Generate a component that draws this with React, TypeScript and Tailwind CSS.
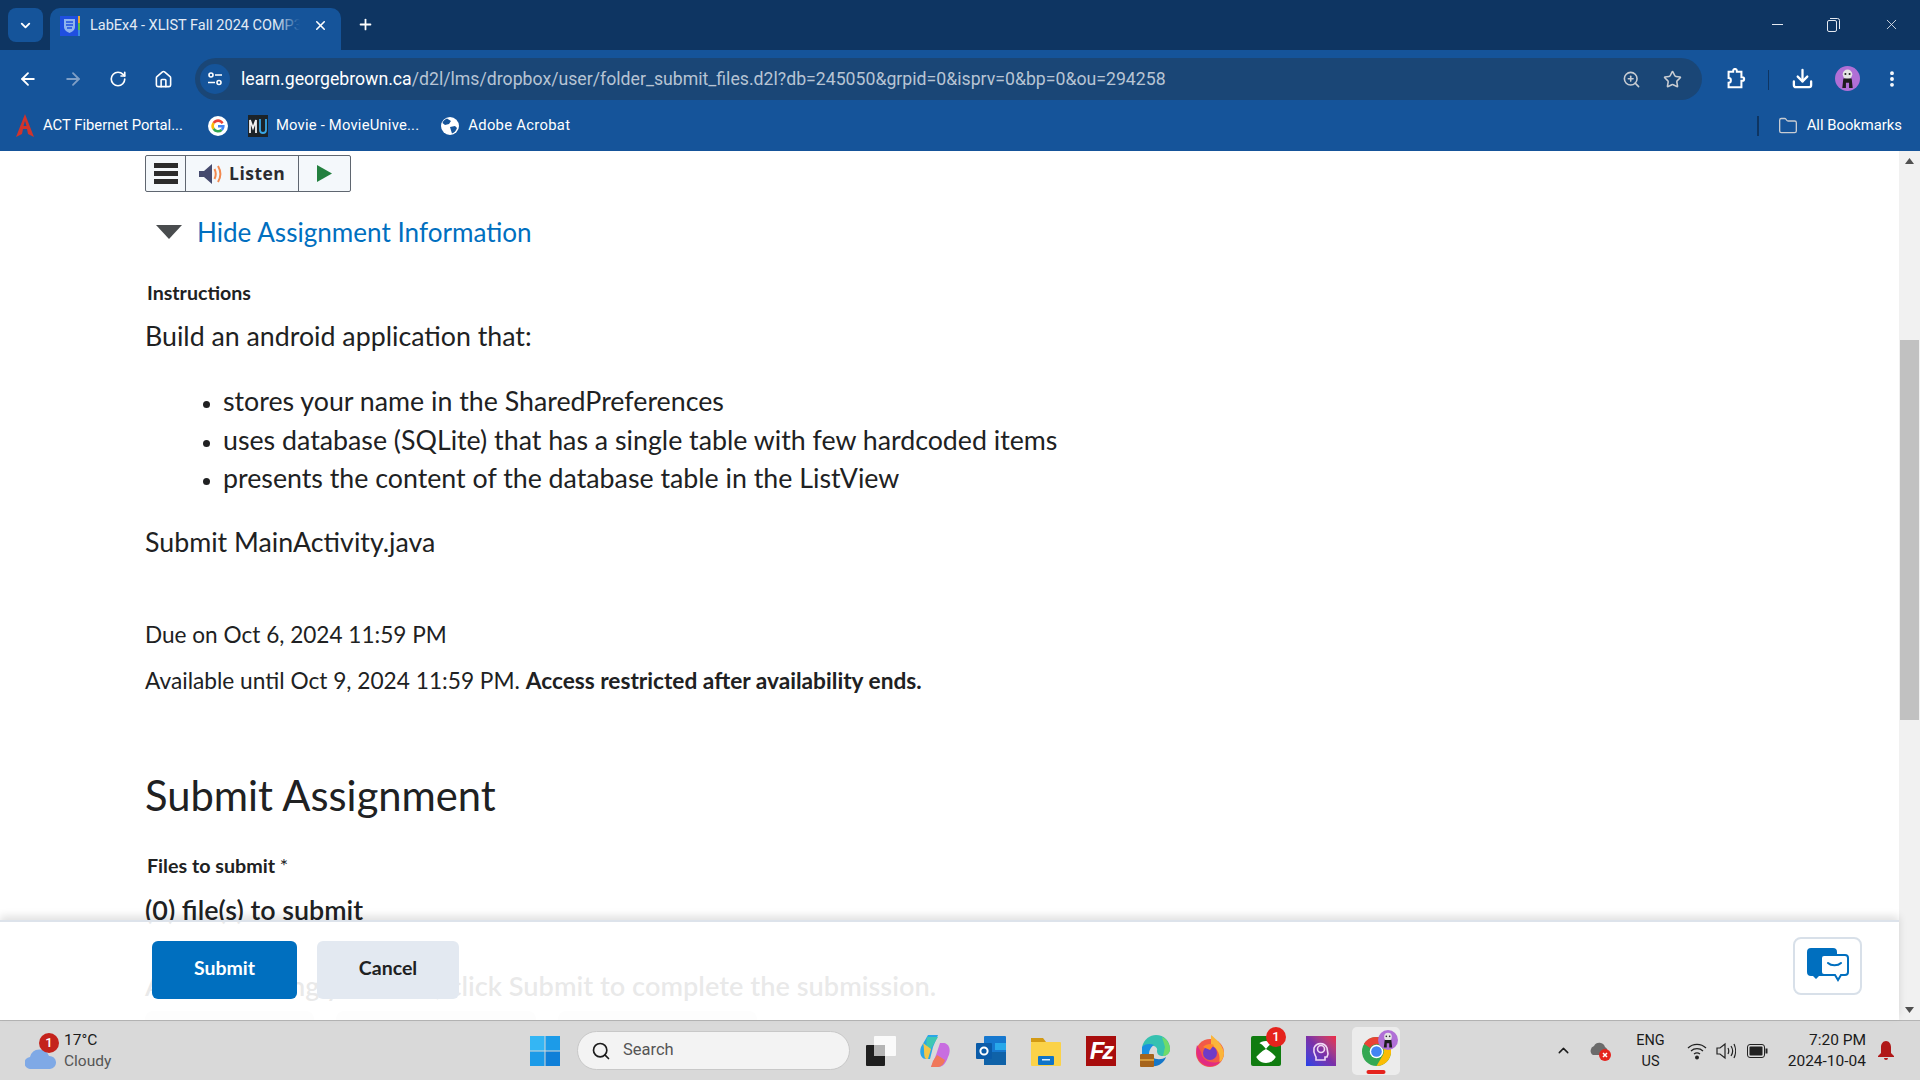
import { ArrowLeft, ArrowRight, ChevronDown, ChevronUp, Download, Folder, House, MoreVertical, Plus, RotateCw, Search, Star, X, ZoomIn } from "lucide-react";

const bullets = [
  "stores your name in the SharedPreferences",
  "uses database (SQLite) that has a single table with few hardcoded items",
  "presents the content of the database table in the ListView",
];

function PandaAvatar({ size }: { size: number }) {
  return (
    <svg width={size} height={size} viewBox="0 0 24 24">
      <circle cx="12" cy="12" r="12" fill="#b06fd6" />
      <circle cx="12" cy="8" r="4.6" fill="#e4e4e4" />
      <circle cx="10" cy="7.6" r="1" fill="#222" />
      <circle cx="14" cy="7.6" r="1" fill="#222" />
      <path d="M8 12h8l1 9h-3.5v-5h-3v5H7z" fill="#1c1c1c" />
    </svg>
  );
}

function TitleBar() {
  return (
    <div className="flex h-[50px] shrink-0 items-end bg-[#0e3562] pl-[8px] text-white">
      <div className="mb-[8px] flex h-[34px] w-[35px] items-center justify-center rounded-lg bg-[#15549a]">
        <ChevronDown size={15} strokeWidth={3} />
      </div>
      <div className="ml-[7px] flex h-[42px] w-[291px] items-center rounded-t-[10px] bg-[#15549a] pb-[7px] pl-[10px] pr-[13px]">
        <svg width="20" height="20" viewBox="0 0 20 20" className="shrink-0">
          <rect width="20" height="20" fill="#1f4fe0" />
          <rect x="18" width="2" height="7" fill="#e8a33a" />
          <rect x="18" y="7" width="2" height="7" fill="#55c04a" />
          <rect x="18" y="14" width="2" height="6" fill="#3a8de0" />
          <path d="M4 3h11v8c0 3-3 5-5.5 6C7 16 4 14 4 11z" fill="#8fb4ee" />
          <path d="M6 6h7M6 9h7M7 12h5" stroke="#1f4fe0" strokeWidth="1.4" />
        </svg>
        <div className="relative ml-[10px] w-[210px] overflow-hidden font-['Roboto',sans-serif] text-[14.5px] whitespace-nowrap text-[#e3ebf5]">
          LabEx4 - XLIST Fall 2024 COMP3
          <div className="absolute top-0 right-0 bottom-0 w-[24px] bg-gradient-to-r from-transparent to-[#15549a]" />
        </div>
        <X size={15} strokeWidth={2.5} className="ml-auto" />
      </div>
      <div className="mb-[17px] ml-[16px]">
        <Plus size={17} strokeWidth={2.5} />
      </div>
      <div className="mb-[17px] ml-auto flex items-center pr-[20px] text-[#e4e9f0]">
        <div className="h-px w-[11px] bg-current" />
        <svg width="13" height="14" viewBox="0 0 13 14" fill="none" stroke="currentColor" className="ml-[44px]">
          <rect x="0.5" y="2.5" width="9" height="11" rx="1.5" />
          <path d="M3 .5h7.5a2 2 0 0 1 2 2V11" />
        </svg>
        <X size={17} strokeWidth={1.2} className="ml-[43px]" />
      </div>
    </div>
  );
}

function AddressBar() {
  return (
    <div className="flex h-[57px] items-start pt-[8px] pl-[18px] text-white">
      <ArrowLeft size={20} strokeWidth={2.2} className="mt-[11px] shrink-0" />
      <ArrowRight size={20} strokeWidth={2.2} className="mt-[11px] ml-[25px] shrink-0 text-[#7f9fc6]" />
      <RotateCw size={18} strokeWidth={2.2} className="mt-[12px] ml-[26px] shrink-0" />
      <House size={19} strokeWidth={2} className="mt-[12px] ml-[27px] shrink-0" />
      <div className="ml-[22px] flex h-[42px] w-[1507px] shrink-0 items-center rounded-full bg-[#1a4676] pl-[5px] pr-[20px]">
        <div className="flex h-[30px] w-[30px] items-center justify-center rounded-full bg-[#15549a]">
          <svg width="16" height="14" viewBox="0 0 16 14" fill="none" stroke="#fff" strokeWidth="1.6">
            <circle cx="4" cy="3" r="2" />
            <path d="M8 3h7M1 10.5h7" />
            <circle cx="12" cy="10.5" r="2" />
          </svg>
        </div>
        <span className="ml-[11px] font-['Roboto',sans-serif] text-[17.7px] whitespace-nowrap text-[#b7c4d4]">
          <span className="text-white">learn.georgebrown.ca</span>/d2l/lms/dropbox/user/folder_submit_files.d2l?db=245050&grpid=0&isprv=0&bp=0&ou=294258
        </span>
        <ZoomIn size={19} strokeWidth={2} className="ml-auto text-[#c8ccd2]" />
        <Star size={19} strokeWidth={2} className="ml-[22px] text-[#c8ccd2]" />
      </div>
      <svg width="22" height="22" viewBox="0 0 24 24" fill="none" stroke="#fff" strokeWidth="2.2" className="mt-[10px] ml-[22px] shrink-0">
        <path d="M5 4h5V3a2 2 0 0 1 4 0v1h5v6h1a2 2 0 0 1 0 4h-1v7H5v-5a2.5 2.5 0 0 0 0-5z" />
      </svg>
      <div className="mt-[12px] ml-[22px] h-[20px] w-px shrink-0 bg-[#0e3562]" />
      <Download size={23} strokeWidth={2.4} className="mt-[9px] ml-[22px] shrink-0" />
      <div className="mt-[8px] ml-[21px] shrink-0">
        <PandaAvatar size={25} />
      </div>
      <MoreVertical size={20} strokeWidth={2.6} className="mt-[11px] ml-[22px] shrink-0" />
    </div>
  );
}

function BookmarksBar() {
  return (
    <div className="flex h-[37px] items-center pl-[16px] pr-[18px] font-['Roboto',sans-serif] text-[14.8px] text-white">
      <svg width="18" height="24" viewBox="0 0 18 24">
        <path d="M9 0 18 23l-6-3-1-5H7l-1 5-6 3z" fill="#d0342c" />
        <path d="M7.5 12h3L9 7z" fill="#15549a" />
      </svg>
      <span className="ml-[9px]">ACT Fibernet Portal...</span>
      <svg width="20" height="20" viewBox="0 0 20 20" className="ml-[25px]">
        <circle cx="10" cy="10" r="10" fill="#fff" />
        <path d="M15.6 6.4A6.6 6.6 0 0 0 4.6 6.2l2 1.6A4.2 4.2 0 0 1 13.6 8z" fill="#ea4335" />
        <path d="M4.6 6.2a6.6 6.6 0 0 0 0 7.6l2-1.7a4 4 0 0 1 0-4.3z" fill="#fbbc05" />
        <path d="M4.6 13.8a6.6 6.6 0 0 0 10 .9l-2-1.6a4.2 4.2 0 0 1-6-1z" fill="#34a853" />
        <path d="M16.6 9H10v2.4h3.8c-.2.7-.6 1.300-1.200 1.700l2 1.600c1.300-1.200 2-3 2-5z" fill="#4285f4" />
      </svg>
      <svg width="20" height="22" viewBox="0 0 20 22" className="ml-[20px]">
        <rect width="20" height="22" fill="#1c2328" />
        <path d="M2 18V5l3 8 3-8v13" fill="none" stroke="#f2f2f2" strokeWidth="1.800" />
        <path d="M12 4v11a3 3 0 0 0 6 0V4" fill="none" stroke="#38a5e4" strokeWidth="1.800" />
      </svg>
      <span className="ml-[8px] tracking-[0.2px]">Movie - MovieUnive...</span>
      <svg width="18" height="18" viewBox="0 0 18 18" className="ml-[22px]">
        <circle cx="9" cy="9" r="9" fill="#fff" />
        <path d="M6 1.500 10 4 8 7 4 8 1.500 6C2 4 4 2 6 1.500zM9 10l5-1 2 2c-1 3-3 5-5 5.500l-1-3z" fill="#15549a" />
      </svg>
      <span className="ml-[9px] tracking-[0.3px]">Adobe Acrobat</span>
      <div className="ml-auto h-[20px] w-[2px] bg-[#0e3562]" />
      <Folder size={20} strokeWidth={1.6} className="ml-[19px] text-[#c8ccd2]" />
      <span className="ml-[9px]">All Bookmarks</span>
    </div>
  );
}

function ListenBar() {
  return (
    <div className="flex h-[37px] w-[206px] overflow-hidden rounded-[2px] border border-[#5f6670] bg-[#f4f8fb]">
      <div className="flex w-[40px] flex-col items-center justify-center gap-[3px] border-r border-[#5f6670]">
        <div className="h-[5px] w-[24px] bg-[#2b2b2b]" />
        <div className="h-[5px] w-[24px] bg-[#2b2b2b]" />
        <div className="h-[5px] w-[24px] bg-[#2b2b2b]" />
      </div>
      <div className="flex w-[113px] items-center border-r border-[#5f6670] pl-[13px] font-['Open_Sans',sans-serif] text-[17.5px] font-bold tracking-[0.5px] text-[#2b2b30]">
        <svg width="25" height="20" viewBox="0 0 25 20" fill="none" className="mr-[5px]">
          <path d="M0 7h5l8-7v20l-8-7H0z" fill="#454a6e" />
          <path d="M15.500 5c1.500 3 1.500 7 0 10" stroke="#f2894f" strokeWidth="2" />
          <path d="M19 2c3 5 3 11 0 16" stroke="#f2894f" strokeWidth="2" />
        </svg>
        Listen
      </div>
      <div className="flex flex-1 items-center justify-center">
        <svg width="15" height="17" viewBox="0 0 15 17">
          <path d="M0 0 15 8.500 0 17z" fill="#23803f" />
        </svg>
      </div>
    </div>
  );
}

function PageContent() {
  return (
    <div className="h-full overflow-hidden pl-[145px] font-['Lato',sans-serif] text-[#202122]">
      <div className="pt-[4px]">
        <ListenBar />
      </div>
      <div className="mt-[20px] flex items-center pl-[11px]">
        <svg width="26" height="14" viewBox="0 0 26 14">
          <path d="M0 0h26L13 14z" fill="#494c4e" />
        </svg>
        <span className="ml-[15px] text-[26.1px] leading-[40px] text-[#006fbf]">Hide Assignment Information</span>
      </div>
      <div className="mt-[29px] pl-[2px] text-[19.6px] leading-[24px] font-bold">Instructions</div>
      <p className="mt-[12px] text-[26.75px] leading-[38px]">Build an android application that:</p>
      <ul className="mt-[27px] list-disc pl-[78px] text-[26.75px] leading-[38.5px] marker:text-[20px]">
        {bullets.map((b) => (
          <li key={b}>{b}</li>
        ))}
      </ul>
      <p className="mt-[25px] text-[26.75px] leading-[38px]">Submit MainActivity.java</p>
      <p className="mt-[59px] text-[22.6px] leading-[30px]">Due on Oct 6, 2024 11:59 PM</p>
      <p className="mt-[16px] text-[22.7px] leading-[30px]">
        Available until Oct 9, 2024 11:59 PM. <span className="font-bold">Access restricted after availability ends.</span>
      </p>
      <h2 className="mt-[69px] text-[41.7px] leading-[60px]">Submit Assignment</h2>
      <div className="mt-[29px] pl-[2px] text-[19.7px] leading-[24px] font-bold">
        Files to submit <span className="font-normal">*</span>
      </div>
      <p className="mt-[13px] text-[26.9px] leading-[38px] font-semibold">(0) file(s) to submit</p>
      <p className="mt-[38px] text-[27.2px] leading-[38px] font-semibold">After selecting your files, click Submit to complete the submission.</p>
      <div className="mt-[6px] flex gap-[22px]">
        <div className="h-[40px] w-[169px] rounded-lg bg-[#e6e8ea]" />
        <div className="h-[40px] w-[200px] rounded-lg bg-[#e6e8ea]" />
        <div className="h-[40px] w-[199px] rounded-lg bg-[#e6e8ea]" />
      </div>
    </div>
  );
}

function FloatingButtons() {
  return (
    <div className="absolute right-0 bottom-0 left-0 flex h-[100px] items-start border-t-2 border-[#dde3eb] bg-white/90 pt-[19px] pl-[152px] pr-[37px] font-['Lato',sans-serif] text-[19.5px] shadow-[0_-4px_8px_rgba(0,0,0,0.12)]">
      <button className="h-[58px] w-[145px] rounded-[6px] bg-[#006fbf] pb-[5px] font-bold text-white">Submit</button>
      <button className="ml-[20px] h-[58px] w-[142px] rounded-[6px] bg-[#e3e9f1] pb-[5px] font-bold text-[#202122]">Cancel</button>
      <button className="mt-[-4px] ml-auto flex h-[58px] w-[69px] items-center justify-center rounded-[8px] border-2 border-[#d8e0e9] bg-white">
        <svg width="42" height="36" viewBox="0 0 42 36">
          <path d="M4 0h22a4 4 0 0 1 4 4v20a4 4 0 0 1-4 4H12l-3 3-3-3H4a4 4 0 0 1-4-4V4a4 4 0 0 1 4-4z" fill="#006fbf" />
          <path d="M17 7h21a3 3 0 0 1 3 3v14a3 3 0 0 1-3 3h-4l-3 5-3-5H17a3 3 0 0 1-3-3V10a3 3 0 0 1 3-3z" fill="#fff" stroke="#006fbf" strokeWidth="2" />
          <path d="M21 15c3 3 10 3 13 0" fill="none" stroke="#006fbf" strokeWidth="2" strokeLinecap="round" />
        </svg>
      </button>
    </div>
  );
}

function Scrollbar() {
  return (
    <div className="flex w-[21px] shrink-0 flex-col bg-[#f1f1f1]">
      <div className="flex h-[20px] items-center justify-center">
        <svg width="9" height="6" viewBox="0 0 9 6">
          <path d="M4.500 0 9 6H0z" fill="#505050" />
        </svg>
      </div>
      <div className="mt-[169px] ml-[1px] h-[380px] w-[19px] bg-[#c1c1c1]" />
      <div className="mt-auto flex h-[20px] items-center justify-center">
        <svg width="9" height="6" viewBox="0 0 9 6">
          <path d="M0 0h9L4.500 6z" fill="#505050" />
        </svg>
      </div>
    </div>
  );
}

function TaskIcons() {
  return (
    <>
      {/* task view */}
      <svg width="30" height="30" viewBox="0 0 30 30" className="ml-[16px]">
        <rect x="0" y="9" width="19" height="21" rx="1" fill="#1f1f1f" />
        <rect x="8" y="0" width="22" height="20" rx="1" fill="#fafafa" />
        <rect x="8" y="9" width="11" height="11" fill="#b5b5b5" />
      </svg>
      {/* copilot */}
      <svg width="30" height="32" viewBox="0 0 30 32" className="ml-[24px]">
        <path d="M8 0h10l-5 12-3 12H6C1 24-1 18 1 12z" fill="#2aa6e8" />
        <path d="M7 2h11l-6 10-3 5C6 12 6 6 7 2z" fill="#3fc7b3" />
        <path d="M20 8h4c6 1 7 8 4 14-2 6-5 10-10 10h-7l5-12z" fill="#c86de0" />
        <path d="M11 32h7c3 0 6-3 7-7l-8-5-4 6z" fill="#f0785a" />
        <path d="M3 8C5 14 3 22 6 24h2l3-10z" fill="#f2c64a" />
      </svg>
      {/* outlook */}
      <svg width="30" height="30" viewBox="0 0 30 30" className="ml-[26px]">
        <rect x="8" y="0" width="22" height="28" rx="1" fill="#1678cf" />
        <rect x="19" y="7" width="11" height="7" fill="#28a8ea" />
        <path d="M8 16h22v13H8z" fill="#0f62a8" />
        <rect x="0" y="7" width="16" height="16" rx="1" fill="#0a5ba8" />
        <circle cx="8" cy="15" r="3.6" fill="none" stroke="#fff" strokeWidth="2" />
      </svg>
      {/* explorer */}
      <svg width="30" height="30" viewBox="0 0 30 30" className="ml-[25px]">
        <path d="M0 2h12l3 4h-15z" fill="#d39a14" />
        <rect y="6" width="30" height="24" rx="1" fill="#fbd248" />
        <rect x="7" y="20" width="16" height="9" rx="1" fill="#0f74c8" />
        <rect x="11" y="23" width="8" height="1.500" fill="#d8eeff" />
      </svg>
      {/* filezilla */}
      <div className="ml-[25px] flex h-[30px] w-[30px] items-center justify-center bg-[#a80d0d] font-['Liberation_Sans',sans-serif] text-[24px] leading-none font-bold tracking-[-2px] text-white italic">
        Fz
      </div>
      {/* edge */}
      <svg width="30" height="32" viewBox="0 0 30 32" className="ml-[24px]">
        <path d="M2 12C4 4 10 0 16 0c8 0 14 6 14 14 0 4-3 7-7 7-4 0-6-2-6-5 2-6-10-8-15-4z" fill="#35c1b0" />
        <path d="M22 2c5 2 8 7 8 12 0 4-3 7-7 7l2-9z" fill="#6fdb6a" />
        <path d="M2 12c2-3 8-4 12-2-3 2-5 5-5 10l-7 2z" fill="#1a8fe0" />
        <path d="M12 22c4 3 10 3 14 0-2 6-8 10-14 9z" fill="#1577c9" />
        <rect x="0" y="19" width="14" height="13" rx="1" fill="#a6641c" />
        <rect x="0" y="24" width="14" height="2" fill="#d59a3c" />
      </svg>
      {/* firefox */}
      <svg width="30" height="32" viewBox="0 0 30 32" className="ml-[25px]">
        <circle cx="15" cy="18" r="14" fill="#f25a48" />
        <path d="M16 0c5 4 12 10 13 18 0 4-2 8-5 10 2-7-1-15-8-18z" fill="#fbb53a" />
        <path d="M2 10c-2 8 0 18 10 21 6 1 11-1 14-5-8 4-19 0-20-9z" fill="#e22c82" />
        <circle cx="15" cy="18" r="7" fill="#6f3bc7" />
        <path d="M8 12c3-3 8-4 11-2l-4 5z" fill="#ff8a2a" />
      </svg>
      {/* xbox with badge */}
      <div className="relative ml-[26px] h-[30px] w-[30px] rounded-[2px] bg-[#107c10]">
        <svg width="30" height="30" viewBox="0 0 30 30">
          <circle cx="15" cy="16" r="11" fill="#fff" />
          <path d="M15 13C11 8 8 6 4 6L3 24c3-5 8-9 12-11zM15 13c4-5 7-7 11-7l1 18c-3-5-8-9-12-11z" fill="#107c10" />
        </svg>
        <div className="absolute -top-[9px] -right-[5px] flex h-[20px] w-[20px] items-center justify-center rounded-full bg-[#e5231d] font-['Roboto',sans-serif] text-[13px] font-medium text-white">
          1
        </div>
      </div>
      {/* proton-like app */}
      <div className="ml-[25px] flex h-[30px] w-[30px] items-center justify-center bg-gradient-to-tr from-[#1d3fe8] via-[#7b2fa8] to-[#f0273f]">
        <svg width="20" height="22" viewBox="0 0 20 22" fill="none" stroke="#f0d8f5" strokeWidth="1.600">
          <path d="M5 20h9v-3h2l1-3-1-6a7 7 0 0 0-13 0c-1 5 1 7 2 9z" />
          <circle cx="10" cy="9" r="3.500" />
        </svg>
      </div>
      {/* chrome, active */}
      <div className="relative ml-[16px] flex h-[48px] w-[48px] items-start justify-center rounded-[5px] bg-[#ececec] pt-[10px]">
        <svg width="29" height="29" viewBox="0 0 30 30">
          <circle cx="15" cy="15" r="15" fill="#34a853" />
          <path d="M15 0a15 15 0 0 1 13 7.500H15a7.500 7.500 0 0 0-6.500 3.750L2 7A15 15 0 0 1 15 0z" fill="#ea4335" />
          <path d="M28 7.500A15 15 0 0 1 15 30l6.500-11.250A7.500 7.500 0 0 0 21.500 11z" fill="#fbbc05" />
          <circle cx="15" cy="15" r="7" fill="#fff" />
          <circle cx="15" cy="15" r="5.500" fill="#4285f4" />
        </svg>
        <div className="absolute top-[3px] right-[2px]">
          <PandaAvatar size={20} />
        </div>
        <div className="absolute bottom-[1px] left-1/2 h-[4px] w-[19px] -translate-x-1/2 rounded-full bg-[#e5231d]" />
      </div>
    </>
  );
}

function Tray() {
  return (
    <div className="ml-auto flex items-center pr-[25px] text-[#1b1b1b]">
      <ChevronUp size={17} strokeWidth={2} />
      <svg width="22" height="20" viewBox="0 0 22 20" className="ml-[18px]">
        <path d="M3 14a5 5 0 0 1 1-9 6 6 0 0 1 11 1 5 5 0 0 1 1 8z" fill="#6b6b6b" />
        <circle cx="15" cy="14" r="6" fill="#e5231d" />
        <path d="M13 12l4 4M17 12l-4 4" stroke="#fff" strokeWidth="1.500" />
      </svg>
      <div className="ml-[24px] text-center text-[14.5px] leading-[21px]">
        ENG
        <br />
        US
      </div>
      <svg width="20" height="18" viewBox="0 0 20 18" fill="none" stroke="#222" strokeWidth="1.300" className="ml-[22px]">
        <path d="M1 6a13 13 0 0 1 18 0M4 9a9 9 0 0 1 12 0M7 12a5 5 0 0 1 6 0" />
        <circle cx="10" cy="15.500" r="1.300" fill="#222" />
      </svg>
      <svg width="20" height="18" viewBox="0 0 20 18" fill="none" stroke="#222" strokeWidth="1.200" className="ml-[9px]">
        <path d="M1 6h3l5-4v14l-5-4H1z" />
        <path d="M12 6c1 2 1 4 0 6M15 4c2 3 2 7 0 10M18 2c2 4 2 10 0 14" />
      </svg>
      <svg width="21" height="14" viewBox="0 0 21 14" className="ml-[11px]">
        <rect x="0.500" y="0.500" width="17" height="13" rx="2.500" fill="none" stroke="#222" />
        <rect x="2.500" y="2.500" width="13" height="9" rx="1" fill="#222" />
        <rect x="18.500" y="4.500" width="2" height="5" fill="#222" />
      </svg>
      <div className="ml-[20px] text-right text-[15.5px] leading-[21px]">
        7:20 PM
        <br />
        2024-10-04
      </div>
      <svg width="18" height="20" viewBox="0 0 18 20" className="ml-[11px]">
        <path d="M9 0c3 0 5 3 5 6v6l3 3v1H1v-1l3-3V6c0-3 2-6 5-6z" fill="#b01818" />
        <path d="M7 17h4a2 2 0 0 1-4 0z" fill="#b01818" />
      </svg>
    </div>
  );
}

function Taskbar() {
  return (
    <div className="flex h-[60px] shrink-0 items-center border-t border-[#b5b5b5] bg-[#d9d9d9] font-['Roboto',sans-serif]">
      <div className="flex w-[530px] shrink-0 items-center pl-[25px]">
        <div className="relative h-[36px] w-[39px]">
          <svg width="31" height="22" viewBox="0 0 31 22" className="absolute top-[14px] left-0">
            <path d="M6 22a6 6 0 0 1-1-12A10 10 0 0 1 24 9a6.500 6.500 0 0 1 1 13z" fill="#7fa9e6" />
          </svg>
          <div className="absolute top-0 left-[14px] flex h-[20px] w-[20px] items-center justify-center rounded-full bg-[#c4231c] text-[13px] font-medium text-white">
            1
          </div>
        </div>
        <div className="text-[15.5px] leading-[21px]">
          <div className="text-[#1b1b1b]">17°C</div>
          <div className="text-[#555]">Cloudy</div>
        </div>
      </div>
      <svg width="30" height="30" viewBox="0 0 30 30" className="shrink-0">
        <rect width="14.500" height="14.500" fill="#34b6f4" />
        <rect x="15.500" width="14.500" height="14.500" fill="#1c9be8" />
        <rect y="15.500" width="14.500" height="14.500" fill="#1c9be8" />
        <rect x="15.500" y="15.500" width="14.500" height="14.500" fill="#0f7fd8" />
      </svg>
      <div className="ml-[17px] flex h-[39px] w-[273px] items-center rounded-full border border-[#c8c8c8] bg-[#f3f3f3] pl-[13px] text-[16.5px] text-[#555]">
        <Search size={20} strokeWidth={2} className="text-[#1b1b1b]" />
        <span className="ml-[12px]">Search</span>
      </div>
      <TaskIcons />
      <Tray />
    </div>
  );
}

export default function App() {
  return (
    <div className="flex h-screen w-screen flex-col overflow-hidden bg-white">
      <TitleBar />
      <div className="h-[101px] shrink-0 bg-[#15549a]">
        <AddressBar />
        <BookmarksBar />
      </div>
      <div className="flex min-h-0 flex-1">
        <div className="relative min-w-0 flex-1">
          <PageContent />
          <FloatingButtons />
        </div>
        <Scrollbar />
      </div>
      <Taskbar />
    </div>
  );
}
